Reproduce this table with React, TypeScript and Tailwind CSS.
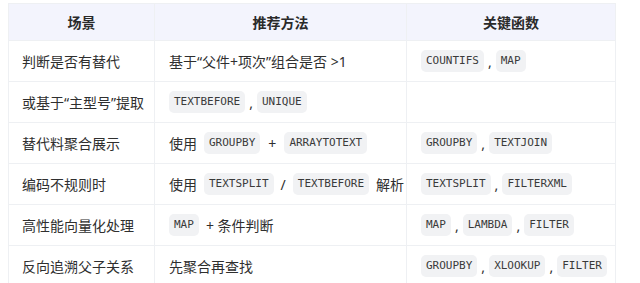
import { Fragment, ReactNode } from "react";

const Code = ({ children }: { children: ReactNode }) => (
  <code className="rounded-[5px] bg-[#f1f2f4] px-[5px] py-[3px] font-['DejaVu_Sans_Mono',monospace] text-[11px] text-[#3a3a3a]">
    {children}
  </code>
);

const gaps: Record<string, string> = {
  ",": "mx-[4px]",
  "+": "mx-[8px]",
  "/": "mx-[7px]",
};

const list = (items: string[], sep = ",") =>
  items.map((it, i) => (
    <Fragment key={it}>
      {i > 0 && <span className={gaps[sep]}>{sep}</span>}
      <Code>{it}</Code>
    </Fragment>
  ));

const rows: { scene: string; method: ReactNode; funcs: ReactNode }[] = [
  {
    scene: "判断是否有替代",
    method: <span>基于“父件+项次”组合是否 &gt;1</span>,
    funcs: list(["COUNTIFS", "MAP"]),
  },
  {
    scene: "或基于“主型号”提取",
    method: list(["TEXTBEFORE", "UNIQUE"]),
    funcs: null,
  },
  {
    scene: "替代料聚合展示",
    method: (
      <>
        <span className="mr-[7px]">使用</span>
        {list(["GROUPBY", "ARRAYTOTEXT"], "+")}
      </>
    ),
    funcs: list(["GROUPBY", "TEXTJOIN"]),
  },
  {
    scene: "编码不规则时",
    method: (
      <>
        <span className="mr-[7px]">使用</span>
        {list(["TEXTSPLIT", "TEXTBEFORE"], "/")}
        <span className="ml-[7px]">解析</span>
      </>
    ),
    funcs: list(["TEXTSPLIT", "FILTERXML"]),
  },
  {
    scene: "高性能向量化处理",
    method: (
      <>
        <Code>MAP</Code>
        <span className="ml-[7px]">+ 条件判断</span>
      </>
    ),
    funcs: list(["MAP", "LAMBDA", "FILTER"]),
  },
  {
    scene: "反向追溯父子关系",
    method: <span>先聚合再查找</span>,
    funcs: list(["GROUPBY", "XLOOKUP", "FILTER"]),
  },
];

export default function App() {
  return (
    <div className="h-[283px] overflow-hidden bg-white pl-2 pt-[3px] font-['Noto_Sans','Noto_Sans_CJK_SC',sans-serif] text-[14px] text-[#2f2f2f]">
      <div className="w-[608px] border-l border-r border-t border-[#eef0f3]">
        <div className="grid h-[36px] grid-cols-[146px_252px_1fr] bg-[#f3f4fd] font-bold text-[#2a2a2a]">
          <div className="flex items-center justify-center border-r border-[#eef0f3]">场景</div>
          <div className="flex items-center justify-center border-r border-[#eef0f3]">推荐方法</div>
          <div className="flex items-center justify-center">关键函数</div>
        </div>
        {rows.map((r) => (
          <div
            key={r.scene}
            className="grid h-[41px] grid-cols-[146px_252px_1fr] border-t border-[#eef0f3]"
          >
            <div className="flex items-center border-r border-[#eef0f3] px-[13px] whitespace-nowrap">
              {r.scene}
            </div>
            <div className="flex items-center border-r border-[#eef0f3] px-[14px] whitespace-nowrap">
              {r.method}
            </div>
            <div className="flex items-center px-[14px] whitespace-nowrap">{r.funcs}</div>
          </div>
        ))}
      </div>
    </div>
  );
}
